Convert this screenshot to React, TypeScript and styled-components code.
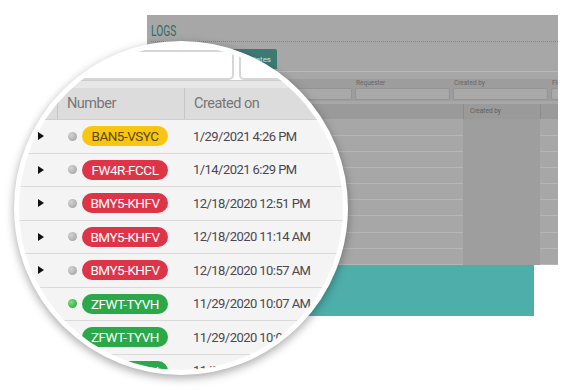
import React from "react";
import styled, { createGlobalStyle } from "styled-components";

const GlobalStyle = createGlobalStyle`
  html, body {
    margin: 0;
    padding: 0;
    background: #fff;
  }
  body {
    font-family: Roboto, "Liberation Sans", sans-serif;
  }
  * {
    box-sizing: border-box;
  }
`;

const Stage = styled.div`
  position: relative;
  width: 570px;
  height: 390px;
  overflow: hidden;
  padding: 15px 0 0 147px;
`;

/* background screenshot */

const Panel = styled.div`
  width: 411px;
  height: 250px;
  background: #a7a7a7;
  overflow: hidden;
  display: flex;
  flex-direction: column;
`;

const TitleBar = styled.div`
  height: 28px;
  margin: 0 0 0 4px;
  padding-top: 6px;
  border-bottom: 1px dotted #858585;
`;

const Title = styled.span`
  display: inline-block;
  font-size: 15px;
  color: #2d6c67;
  transform: scaleX(0.68);
  transform-origin: left center;
`;

const Toolbar = styled.div`
  height: 30px;
  padding: 7px 0 0 48px;
  border-bottom: 1px solid #b9b9b9;
`;

const TabButton = styled.div`
  width: 82px;
  height: 20px;
  background: #3e7a74;
  border-radius: 2px 2px 0 0;
  color: #d8e6e4;
  font-size: 8px;
  display: flex;
  align-items: center;
  justify-content: flex-end;
  padding-right: 6px;
`;

const FilterArea = styled.div`
  margin-top: 7px;
  height: 23px;
  background: #9d9d9d;
  padding-left: 12px;
  display: grid;
  grid-template-columns: repeat(5, 95px);
  column-gap: 3px;
`;

const FilterField = styled.div`
  display: flex;
  flex-direction: column;
`;

const FilterLabel = styled.span`
  height: 9px;
  font-size: 6.5px;
  line-height: 9px;
  color: #666;
  padding-left: 1px;
`;

const FilterInput = styled.div`
  height: 12px;
  background: #a9a9a9;
  border: 1px solid #949494;
  border-radius: 2px;
`;

const BgHeader = styled.div`
  margin-top: 3px;
  height: 15px;
  background: #9a9a9a;
  display: grid;
  grid-template-columns: 316px 77px 1fr;
`;

const BgHeaderCell = styled.div<{ $divider?: boolean }>`
  border-left: ${(p) => (p.$divider ? "1px solid #8c8c8c" : "none")};
  font-size: 6.5px;
  line-height: 15px;
  color: #5e5e5e;
  padding-left: 6px;
`;

const BgRow = styled.div`
  height: 16.6px;
  display: grid;
  grid-template-columns: 316px 77px 1fr;
`;

const BgCell = styled.div<{ $shade?: boolean }>`
  background: ${(p) => (p.$shade ? "#9e9e9e" : "transparent")};
  border-bottom: ${(p) => (p.$shade ? "none" : "1px solid #b6b6b6")};
`;

const TealBlock = styled.div`
  margin-left: 53px;
  width: 334px;
  height: 51px;
  background: #4eafaa;
`;

/* magnifier */

const Lens = styled.div`
  position: absolute;
  left: 14px;
  top: 41px;
  width: 334px;
  height: 334px;
  border-radius: 50%;
  border: 5px solid #fff;
  overflow: hidden;
  background: #fff;
  box-shadow: 0 3px 10px rgba(0, 0, 0, 0.35);
`;

const LensFilters = styled.div`
  height: 34px;
  display: flex;
  align-items: flex-end;
  gap: 5px;
  padding-left: 30px;
`;

const FilterBox = styled.div<{ $w: number }>`
  flex: none;
  width: ${(p) => p.$w}px;
  height: 30px;
  border: 2px solid #d6d6d6;
  border-radius: 5px;
  background: #fff;
`;

const Band = styled.div`
  height: 8px;
  background: #e7e7e7;
  border-top: 1px solid #cdcdcd;
`;

const HeaderRow = styled.div`
  height: 32px;
  display: grid;
  grid-template-columns: 39px 127px 1fr;
  background: #dcdcdc;
  border-bottom: 1px solid #cfcfcf;
`;

const HeaderCell = styled.div<{ $last?: boolean }>`
  display: flex;
  align-items: center;
  padding-left: 9px;
  border-right: ${(p) => (p.$last ? "none" : "1px solid #c6c6c6")};
  font-size: 14.5px;
  letter-spacing: -0.5px;
  color: #767676;
`;

const Row = styled.div`
  height: 33.5px;
  display: grid;
  grid-template-columns: 39px 127px 1fr;
  align-items: center;
  background: #f4f4f4;
  border-bottom: 1px solid #dadada;
`;

const ExpandCell = styled.div`
  padding-left: 19px;
  display: flex;
  align-items: center;
`;

const Caret = styled.span`
  width: 0;
  height: 0;
  border-left: 6px solid #111;
  border-top: 4px solid transparent;
  border-bottom: 4px solid transparent;
`;

const NumberCell = styled.div`
  display: flex;
  align-items: center;
  padding-left: 10px;
  gap: 5px;
`;

const StatusDot = styled.span<{ $on?: boolean }>`
  width: 9px;
  height: 9px;
  border-radius: 50%;
  flex: none;
  background: ${(p) =>
    p.$on
      ? "radial-gradient(circle at 35% 35%, #7de27d, #239a2a)"
      : "radial-gradient(circle at 35% 35%, #d4d4d4, #9c9c9c)"};
`;

const tones = {
  yellow: { bg: "#f8c513", fg: "#5b4800" },
  red: { bg: "#de3447", fg: "#ffffff" },
  green: { bg: "#2aa84a", fg: "#ffffff" },
};

type Tone = keyof typeof tones;

const Pill = styled.span<{ $tone: Tone }>`
  width: 86px;
  height: 20px;
  flex: none;
  border-radius: 10px;
  background: ${(p) => tones[p.$tone].bg};
  color: ${(p) => tones[p.$tone].fg};
  font-size: 13.5px;
  letter-spacing: -0.5px;
  display: flex;
  align-items: center;
  justify-content: center;
`;

const DateCell = styled.div`
  padding-left: 8px;
  font-size: 13px;
  letter-spacing: -0.55px;
  color: #4b4752;
  white-space: nowrap;
`;

type Log = { id: string; tone: Tone; date: string; dot?: boolean };

const logs: Log[] = [
  { id: "BAN5-VSYC", tone: "yellow", date: "1/29/2021 4:26 PM" },
  { id: "FW4R-FCCL", tone: "red", date: "1/14/2021 6:29 PM" },
  { id: "BMY5-KHFV", tone: "red", date: "12/18/2020 12:51 PM" },
  { id: "BMY5-KHFV", tone: "red", date: "12/18/2020 11:14 AM" },
  { id: "BMY5-KHFV", tone: "red", date: "12/18/2020 10:57 AM" },
  { id: "ZFWT-TYVH", tone: "green", date: "11/29/2020 10:07 AM", dot: true },
  { id: "ZFWT-TYVH", tone: "green", date: "11/29/2020 10:06 AM", dot: true },
  { id: "ZFWT-TYVH", tone: "green", date: "11/29/2020 10:05 AM", dot: true },
];

const filterLabels = ["Status", "Type", "Requester", "Created by", "Flow"];

export default function App() {
  return (
    <>
      <GlobalStyle />
      <Stage>
        <Panel>
          <TitleBar>
            <Title>LOGS</Title>
          </TitleBar>
          <Toolbar>
            <TabButton>Templates</TabButton>
          </Toolbar>
          <FilterArea>
            {filterLabels.map((l) => (
              <FilterField key={l}>
                <FilterLabel>{l}</FilterLabel>
                <FilterInput />
              </FilterField>
            ))}
          </FilterArea>
          <BgHeader>
            <BgHeaderCell />
            <BgHeaderCell $divider>Created by</BgHeaderCell>
            <BgHeaderCell $divider />
          </BgHeader>
          {Array.from({ length: 9 }).map((_, i) => (
            <BgRow key={i}>
              <BgCell />
              <BgCell $shade />
              <BgCell />
            </BgRow>
          ))}
        </Panel>
        <TealBlock />

        <Lens>
          <LensFilters>
            <FilterBox $w={185} />
            <FilterBox $w={200} />
          </LensFilters>
          <Band />
          <HeaderRow>
            <HeaderCell />
            <HeaderCell>Number</HeaderCell>
            <HeaderCell $last>Created on</HeaderCell>
          </HeaderRow>
          {logs.map((log, i) => (
            <Row key={i}>
              <ExpandCell>
                <Caret />
              </ExpandCell>
              <NumberCell>
                <StatusDot $on={log.dot} />
                <Pill $tone={log.tone}>{log.id}</Pill>
              </NumberCell>
              <DateCell>{log.date}</DateCell>
            </Row>
          ))}
        </Lens>
      </Stage>
    </>
  );
}
